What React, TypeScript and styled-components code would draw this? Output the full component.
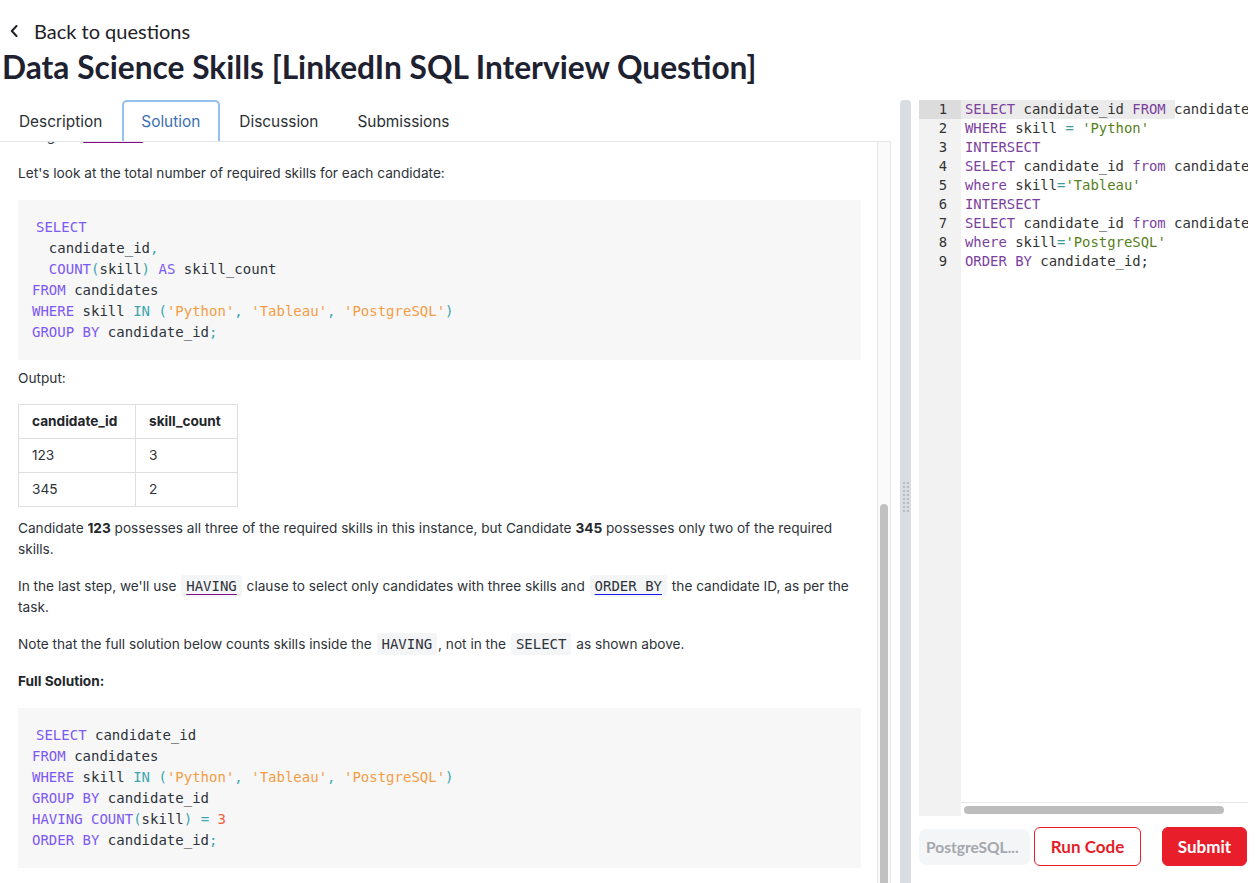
import React from "react";
import styled, { createGlobalStyle } from "styled-components";

const GlobalStyle = createGlobalStyle`
  html, body {
    margin: 0;
    padding: 0;
    background: #ffffff;
    overflow: hidden;
  }
  body {
    font-family: Inter, "Noto Sans", sans-serif;
    color: #2d3339;
  }
  * {
    box-sizing: border-box;
  }
`;

const Page = styled.div`
  height: 883px;
  display: flex;
  flex-direction: column;
  overflow: hidden;
`;

const Header = styled.header`
  padding: 19px 0 0 2px;
  font-family: Lato, "Open Sans", sans-serif;
`;

const BackLink = styled.a`
  display: flex;
  align-items: center;
  gap: 16px;
  padding-left: 8px;
  height: 24px;
  font-size: 20px;
  color: #1f2127;
  text-decoration: none;
  cursor: pointer;
`;

const Title = styled.h1`
  margin: 4px 0 0;
  font-size: 31.7px;
  line-height: 40px;
  font-weight: 700;
  color: #1d2130;
`;

const Workspace = styled.div`
  flex: 1;
  min-height: 0;
  display: flex;
  margin-top: 13px;
`;

const LeftPanel = styled.section`
  width: 891px;
  display: flex;
  flex-direction: column;
  min-height: 0;
`;

const Tabs = styled.nav`
  display: flex;
  height: 42px;
  border-bottom: 1px solid #e2e5e9;
`;

const Tab = styled.button<{ $active?: boolean }>`
  height: 41px;
  padding: 0 18px 0 17px;
  border: 2px solid ${(p) => (p.$active ? "#93c1eb" : "transparent")};
  border-bottom: none;
  border-radius: 5px 5px 0 0;
  background: #ffffff;
  font-family: Inter, "Noto Sans", sans-serif;
  font-size: 15.4px;
  color: ${(p) => (p.$active ? "#3b6fb3" : "#2b2f33")};
  cursor: pointer;
`;

const Body = styled.div`
  flex: 1;
  min-height: 0;
  display: flex;
`;

const Content = styled.article`
  flex: 1;
  overflow: hidden;
  padding: 0 16px 0 18px;
  font-size: 13.65px;
  line-height: 21px;
`;

const Para = styled.p<{ $clip?: boolean }>`
  margin: ${(p) => (p.$clip ? "-16px 0 16px" : "0 0 16px")};
`;

const Strong = styled.strong`
  font-weight: 700;
  color: #23272c;
`;

const InlineCode = styled.code<{ $link?: "visited" | "plain" }>`
  font-family: "DejaVu Sans Mono", monospace;
  font-size: 14px;
  background: #f4f5f7;
  border-radius: 3px;
  padding: 3px 5px;
  margin: 0 1px;
  color: #2d3339;
  text-decoration: ${(p) => (p.$link ? "underline" : "none")};
  text-decoration-color: ${(p) => (p.$link === "visited" ? "#860b86" : "#1a1aee")};
  text-underline-offset: 3px;
`;

const StubLink = styled.span`
  text-decoration: underline;
  text-decoration-color: #860b86;
  color: transparent;
`;

const CodeBlock = styled.pre<{ $after?: number }>`
  margin: 0 0 ${(p) => p.$after ?? 8}px;
  padding: 17px 14px;
  background: #f7f7f8;
  font-family: "DejaVu Sans Mono", monospace;
  font-size: 14px;
  line-height: 21px;
  color: #2d3339;
`;

const CodeLine = styled.div<{ $offset?: number }>`
  padding-left: ${(p) => p.$offset ?? 0}px;
  white-space: pre;
`;

const Kw = styled.span`
  color: #7d58f2;
`;
const Punc = styled.span`
  color: #3aa6b0;
`;
const Str = styled.span`
  color: #f49d45;
`;
const Num = styled.span`
  color: #ef5f3c;
`;

const Label = styled.p`
  margin: 0 0 15px;
`;

const Table = styled.table`
  border-collapse: collapse;
  margin: 0 0 11px;
  font-size: 13.65px;
`;

const Cell = styled.td<{ $head?: boolean; $w?: number }>`
  border: 1px solid #dcdfe2;
  height: 34px;
  padding: 0 13px;
  width: ${(p) => (p.$w ? `${p.$w}px` : "auto")};
  font-weight: ${(p) => (p.$head ? 700 : 400)};
  color: ${(p) => (p.$head ? "#22262b" : "#2d3339")};
`;

const ScrollTrack = styled.div`
  width: 14px;
  border-left: 1px solid #e6e7e9;
  border-right: 1px solid #e6e7e9;
  background: #fafafa;
  display: flex;
  flex-direction: column;
  align-items: center;
`;

const ScrollThumb = styled.div`
  margin-top: 362px;
  flex: 1;
  width: 8px;
  border-radius: 4px 4px 0 0;
  background: #c1c1c1;
`;

const Splitter = styled.div`
  width: 11px;
  margin-left: 9px;
  background: #d9dde1;
  border-radius: 4px 4px 0 0;
  display: flex;
  align-items: center;
  justify-content: center;
`;

const Grip = styled.div`
  display: grid;
  grid-template-columns: repeat(2, 2px);
  grid-auto-rows: 2px;
  gap: 2px;
  margin-top: 10px;
`;

const Dot = styled.span`
  background: #b9bdc2;
`;

const EditorPanel = styled.section`
  width: 329px;
  margin-left: 8px;
  display: flex;
  flex-direction: column;
`;

const Editor = styled.div`
  height: 716px;
  display: flex;
  overflow: hidden;
  font-family: "DejaVu Sans Mono", monospace;
  font-size: 13.9px;
  line-height: 19px;
`;

const Gutter = styled.div`
  width: 42px;
  background: #f2f2f2;
  color: #333;
  text-align: right;
`;

const GutterCell = styled.div<{ $active?: boolean }>`
  padding-right: 14px;
  background: ${(p) => (p.$active ? "#dcdcdc" : "transparent")};
`;

const EditorMain = styled.div`
  flex: 1;
  min-width: 0;
  display: flex;
  flex-direction: column;
`;

const Lines = styled.div`
  flex: 1;
  overflow: hidden;
`;

const EditorLine = styled.div<{ $active?: boolean }>`
  padding-left: 4px;
  white-space: pre;
  color: #333333;
  background: ${(p) =>
    p.$active ? "linear-gradient(to right, #ebebeb 214px, #ffffff 214px)" : "transparent"};
`;

const EKw = styled.span`
  color: #7b3f9e;
`;
const EStr = styled.span`
  color: #56801b;
`;
const EOp = styled.span`
  color: #3b9a9a;
`;

const HScroll = styled.div`
  height: 14px;
  border-top: 1px solid #e8e8e8;
  padding: 3px 24px 0 3px;
`;

const HThumb = styled.div`
  height: 8px;
  border-radius: 4px;
  background: #bdbdbd;
`;

const Controls = styled.div`
  display: flex;
  align-items: center;
  margin-top: 11px;
  height: 39px;
  font-family: Lato, "Open Sans", sans-serif;
  font-weight: 700;
`;

const LangSelect = styled.div`
  width: 111px;
  height: 36px;
  padding: 0 7px;
  border-radius: 7px;
  background: #f4f5f7;
  color: #a4a7ac;
  font-size: 15.5px;
  line-height: 36px;
  white-space: nowrap;
  overflow: hidden;
`;

const Button = styled.button<{ $primary?: boolean; $w: number; $gap: number }>`
  width: ${(p) => p.$w}px;
  height: 39px;
  margin-left: ${(p) => p.$gap}px;
  border-radius: 6px;
  border: 1px solid #e81f2b;
  background: ${(p) => (p.$primary ? "#e81f2b" : "#ffffff")};
  color: ${(p) => (p.$primary ? "#ffffff" : "#e31e2a")};
  font-family: Lato, "Open Sans", sans-serif;
  font-weight: 700;
  font-size: 17px;
  cursor: pointer;
`;

const Chevron = () => (
  <svg width="8" height="12" viewBox="0 0 8 12" fill="none">
    <polyline points="6.5,1 1.8,6 6.5,11" stroke="#1f2127" strokeWidth="2" strokeLinecap="round" strokeLinejoin="round" />
  </svg>
);

const editorLines: React.ReactNode[] = [
  <>
    <EKw>SELECT</EKw> candidate_id <EKw>FROM</EKw> candidates <EKw>WHERE</EKw> skill
  </>,
  <>
    <EKw>WHERE</EKw> skill <EOp>=</EOp> <EStr>'Python'</EStr>
  </>,
  <EKw>INTERSECT</EKw>,
  <>
    <EKw>SELECT</EKw> candidate_id <EKw>from</EKw> candidates
  </>,
  <>
    <EKw>where</EKw> skill<EOp>=</EOp>
    <EStr>'Tableau'</EStr>
  </>,
  <EKw>INTERSECT</EKw>,
  <>
    <EKw>SELECT</EKw> candidate_id <EKw>from</EKw> candidates
  </>,
  <>
    <EKw>where</EKw> skill<EOp>=</EOp>
    <EStr>'PostgreSQL'</EStr>
  </>,
  <>
    <EKw>ORDER BY</EKw> candidate_id;
  </>,
];

const WhereLine = () => (
  <CodeLine>
    <Kw>WHERE</Kw> skill <Punc>IN</Punc> <Punc>(</Punc>
    <Str>'Python'</Str>
    <Punc>,</Punc> <Str>'Tableau'</Str>
    <Punc>,</Punc> <Str>'PostgreSQL'</Str>
    <Punc>)</Punc>
  </CodeLine>
);

export default function App() {
  const dots = Array.from({ length: 16 });
  return (
    <Page>
      <GlobalStyle />
      <Header>
        <BackLink>
          <Chevron />
          Back to questions
        </BackLink>
        <Title>Data Science Skills [LinkedIn SQL Interview Question]</Title>
      </Header>
      <Workspace>
        <LeftPanel>
          <Tabs>
            <Tab>Description</Tab>
            <Tab $active>Solution</Tab>
            <Tab>Discussion</Tab>
            <Tab>Submissions</Tab>
          </Tabs>
          <Body>
            <Content>
              <Para $clip>
                Using the <StubLink>COUNT()</StubLink> function
              </Para>
              <Para>Let's look at the total number of required skills for each candidate:</Para>
              <CodeBlock>
                <CodeLine $offset={4}>
                  <Kw>SELECT</Kw>
                </CodeLine>
                <CodeLine>
                  {"  "}candidate_id<Punc>,</Punc>
                </CodeLine>
                <CodeLine>
                  {"  "}
                  <Kw>COUNT</Kw>
                  <Punc>(</Punc>skill<Punc>)</Punc> <Kw>AS</Kw> skill_count
                </CodeLine>
                <CodeLine>
                  <Kw>FROM</Kw> candidates
                </CodeLine>
                <WhereLine />
                <CodeLine>
                  <Kw>GROUP BY</Kw> candidate_id<Punc>;</Punc>
                </CodeLine>
              </CodeBlock>
              <Label>Output:</Label>
              <Table>
                <tbody>
                  <tr>
                    <Cell $head $w={117}>candidate_id</Cell>
                    <Cell $head $w={102}>skill_count</Cell>
                  </tr>
                  <tr>
                    <Cell>123</Cell>
                    <Cell>3</Cell>
                  </tr>
                  <tr>
                    <Cell>345</Cell>
                    <Cell>2</Cell>
                  </tr>
                </tbody>
              </Table>
              <Para>
                Candidate <Strong>123</Strong> possesses all three of the required skills in this instance, but
                Candidate <Strong>345</Strong> possesses only two of the required skills.
              </Para>
              <Para>
                In the last step, we'll use <InlineCode $link="visited">HAVING</InlineCode> clause to select only
                candidates with three skills and <InlineCode $link="plain">ORDER BY</InlineCode> the candidate ID, as
                per the task.
              </Para>
              <Para>
                Note that the full solution below counts skills inside the <InlineCode>HAVING</InlineCode>, not in
                the <InlineCode>SELECT</InlineCode> as shown above.
              </Para>
              <Para>
                <Strong>Full Solution:</Strong>
              </Para>
              <CodeBlock $after={16}>
                <CodeLine $offset={4}>
                  <Kw>SELECT</Kw> candidate_id
                </CodeLine>
                <CodeLine>
                  <Kw>FROM</Kw> candidates
                </CodeLine>
                <WhereLine />
                <CodeLine>
                  <Kw>GROUP BY</Kw> candidate_id
                </CodeLine>
                <CodeLine>
                  <Kw>HAVING</Kw> <Kw>COUNT</Kw>
                  <Punc>(</Punc>skill<Punc>)</Punc> <Punc>=</Punc> <Num>3</Num>
                </CodeLine>
                <CodeLine>
                  <Kw>ORDER BY</Kw> candidate_id<Punc>;</Punc>
                </CodeLine>
              </CodeBlock>
            </Content>
            <ScrollTrack>
              <ScrollThumb />
            </ScrollTrack>
          </Body>
        </LeftPanel>
        <Splitter>
          <Grip>
            {dots.map((_, i) => (
              <Dot key={i} />
            ))}
          </Grip>
        </Splitter>
        <EditorPanel>
          <Editor>
            <Gutter>
              {editorLines.map((_, i) => (
                <GutterCell key={i} $active={i === 0}>
                  {i + 1}
                </GutterCell>
              ))}
            </Gutter>
            <EditorMain>
              <Lines>
                {editorLines.map((line, i) => (
                  <EditorLine key={i} $active={i === 0}>
                    {line}
                  </EditorLine>
                ))}
              </Lines>
              <HScroll>
                <HThumb />
              </HScroll>
            </EditorMain>
          </Editor>
          <Controls>
            <LangSelect>PostgreSQL...</LangSelect>
            <Button $w={107} $gap={4}>
              Run Code
            </Button>
            <Button $primary $w={85} $gap={21}>
              Submit
            </Button>
          </Controls>
        </EditorPanel>
      </Workspace>
    </Page>
  );
}
